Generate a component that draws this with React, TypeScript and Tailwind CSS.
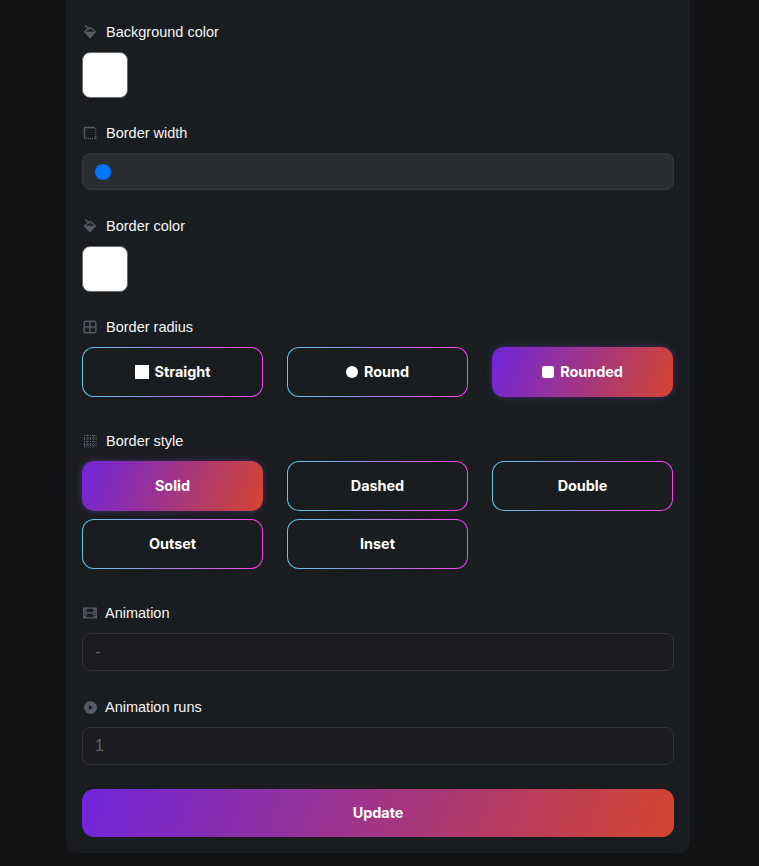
import React from "react";
import { BsPlayCircleFill } from "react-icons/bs";

function BucketIcon() {
  return (
    <svg width="14" height="14" viewBox="0 0 14 14" fill="none">
      <path d="M2.6 0.8 6 4.2" stroke="currentColor" strokeWidth="1.4" strokeLinecap="round" />
      <path d="M1.4 7 6.2 2.8a1 1 0 0 1 1.3 0L12.6 7" stroke="currentColor" strokeWidth="1.3" strokeLinejoin="round" />
      <path d="M0.8 6.8h12.4L7.9 12.7a1.2 1.2 0 0 1-1.8 0z" fill="currentColor" />
    </svg>
  );
}

function WidthIcon() {
  return (
    <svg width="14" height="14" viewBox="0 0 14 14" fill="none" stroke="currentColor">
      <path d="M1.5 13V1.5H12" strokeWidth="1.4" />
      <path d="M12.5 2V13.5M3 12.5H13.5" strokeWidth="1.5" strokeDasharray="1 1" />
    </svg>
  );
}

function GridIcon() {
  return (
    <svg width="14" height="14" viewBox="0 0 14 14" fill="none" stroke="currentColor" strokeWidth="1.4">
      <rect x="1.2" y="1.2" width="11.6" height="11.6" rx="1.2" />
      <path d="M7 1.2v11.6M1.2 7h11.6" />
    </svg>
  );
}

function DottedGridIcon() {
  return (
    <svg width="14" height="14" viewBox="0 0 14 14" fill="none" stroke="currentColor" strokeWidth="1.1" strokeDasharray="1 1">
      <path d="M1 1.5h12M1 4.5h12M1 7.5h12M1 10.5h12M1 13h12" />
      <path d="M1.5 1v12M4.5 1v12M7.5 1v12M10.5 1v12M13 1v12" />
    </svg>
  );
}

function FilmIcon() {
  return (
    <svg width="14" height="12" viewBox="0 0 14 12" fill="currentColor">
      <path fillRule="evenodd" d="M0 0.5h14v11H0zM3.6 1.7v3.6h6.8V1.7zM3.6 6.7v3.6h6.8V6.7z" />
      <path d="M0.8 3h1.8v1H.8zM0.8 5.5h1.8v1H.8zM0.8 8h1.8v1H.8zM11.4 3h1.8v1h-1.8zM11.4 5.5h1.8v1h-1.8zM11.4 8h1.8v1h-1.8z" fill="#2b2f34" />
    </svg>
  );
}

function Label({ icon, text, gap = "gap-[8px]" }: { icon: React.ReactNode; text: string; gap?: string }) {
  return (
    <div className={`flex h-5 items-center ${gap} font-['Liberation_Sans',sans-serif] text-[14.5px] leading-5 text-[#f4f5f6]`}>
      <span className="flex w-4 shrink-0 justify-center text-[#555b64]">{icon}</span>
      <span>{text}</span>
    </div>
  );
}

function Swatch() {
  return <div className="mt-[10px] h-[46px] w-[46px] rounded-lg border border-[#6a6a6a] bg-white" />;
}

function Choice({ children, active = false }: { children: React.ReactNode; active?: boolean }) {
  const look = active
    ? "bg-[linear-gradient(110deg,#6f25dc,#d4452f)] shadow-[0_0_6px_rgba(130,70,220,0.4)]"
    : "border border-transparent [background:linear-gradient(#1a1d20,#1a1d20)_padding-box,linear-gradient(90deg,#5ccbe8,#ff3df5)_border-box]";
  return (
    <div className={`flex h-[50px] items-center justify-center gap-[6px] rounded-xl font-['Inter',sans-serif] text-[14.4px] font-bold text-white ${look}`}>
      {children}
    </div>
  );
}

function Field({ value }: { value: string }) {
  return (
    <input
      readOnly
      value={value}
      className="mt-[10px] block h-[38px] w-full rounded-lg border border-[#2e3135] bg-[#1b1c1f] px-3 font-['Liberation_Sans',sans-serif] text-base text-[#5f636c] outline-none"
    />
  );
}

export default function App() {
  return (
    <div className="flex min-h-[866px] justify-center bg-[#111314] pr-[3px]">
      <div className="mb-[13px] w-[624px] rounded-b-xl bg-[#1a1d20] px-4 pb-4 pt-[22px]">
        <Label icon={<BucketIcon />} text="Background color" />
        <Swatch />

        <div className="mt-[25px]">
          <Label icon={<WidthIcon />} text="Border width" />
          <div className="mt-[10px] flex h-[37px] items-center rounded-lg border border-[#33363b] bg-[#2a2d32] pl-[12px]">
            <div className="h-4 w-4 rounded-full bg-[#0075ff]" />
          </div>
        </div>

        <div className="mt-[26px]">
          <Label icon={<BucketIcon />} text="Border color" />
          <Swatch />
        </div>

        <div className="mt-[25px]">
          <Label icon={<GridIcon />} text="Border radius" />
          <div className="mt-[10px] grid grid-cols-[181px_181px_181px] gap-x-6">
            <Choice>
              <span className="h-[14px] w-[14px] bg-white" />
              Straight
            </Choice>
            <Choice>
              <span className="h-3 w-3 rounded-full bg-white" />
              Round
            </Choice>
            <Choice active>
              <span className="h-3 w-3 rounded-[2px] bg-white" />
              Rounded
            </Choice>
          </div>
        </div>

        <div className="mt-[34px]">
          <Label icon={<DottedGridIcon />} text="Border style" />
          <div className="mt-[10px] grid grid-cols-[181px_181px_181px] gap-x-6 gap-y-2">
            <Choice active>Solid</Choice>
            <Choice>Dashed</Choice>
            <Choice>Double</Choice>
            <Choice>Outset</Choice>
            <Choice>Inset</Choice>
          </div>
        </div>

        <div className="mt-[34px]">
          <Label icon={<FilmIcon />} text="Animation" gap="gap-[7px]" />
          <Field value="-" />
        </div>

        <div className="mt-[26px]">
          <Label icon={<BsPlayCircleFill size={13} />} text="Animation runs" gap="gap-[7px]" />
          <Field value="1" />
        </div>

        <div className="mt-6 flex h-12 items-center justify-center rounded-xl bg-[linear-gradient(110deg,#6f25dc,#d4452f)] font-['Inter',sans-serif] text-[14.4px] font-bold text-white">
          Update
        </div>
      </div>
    </div>
  );
}
